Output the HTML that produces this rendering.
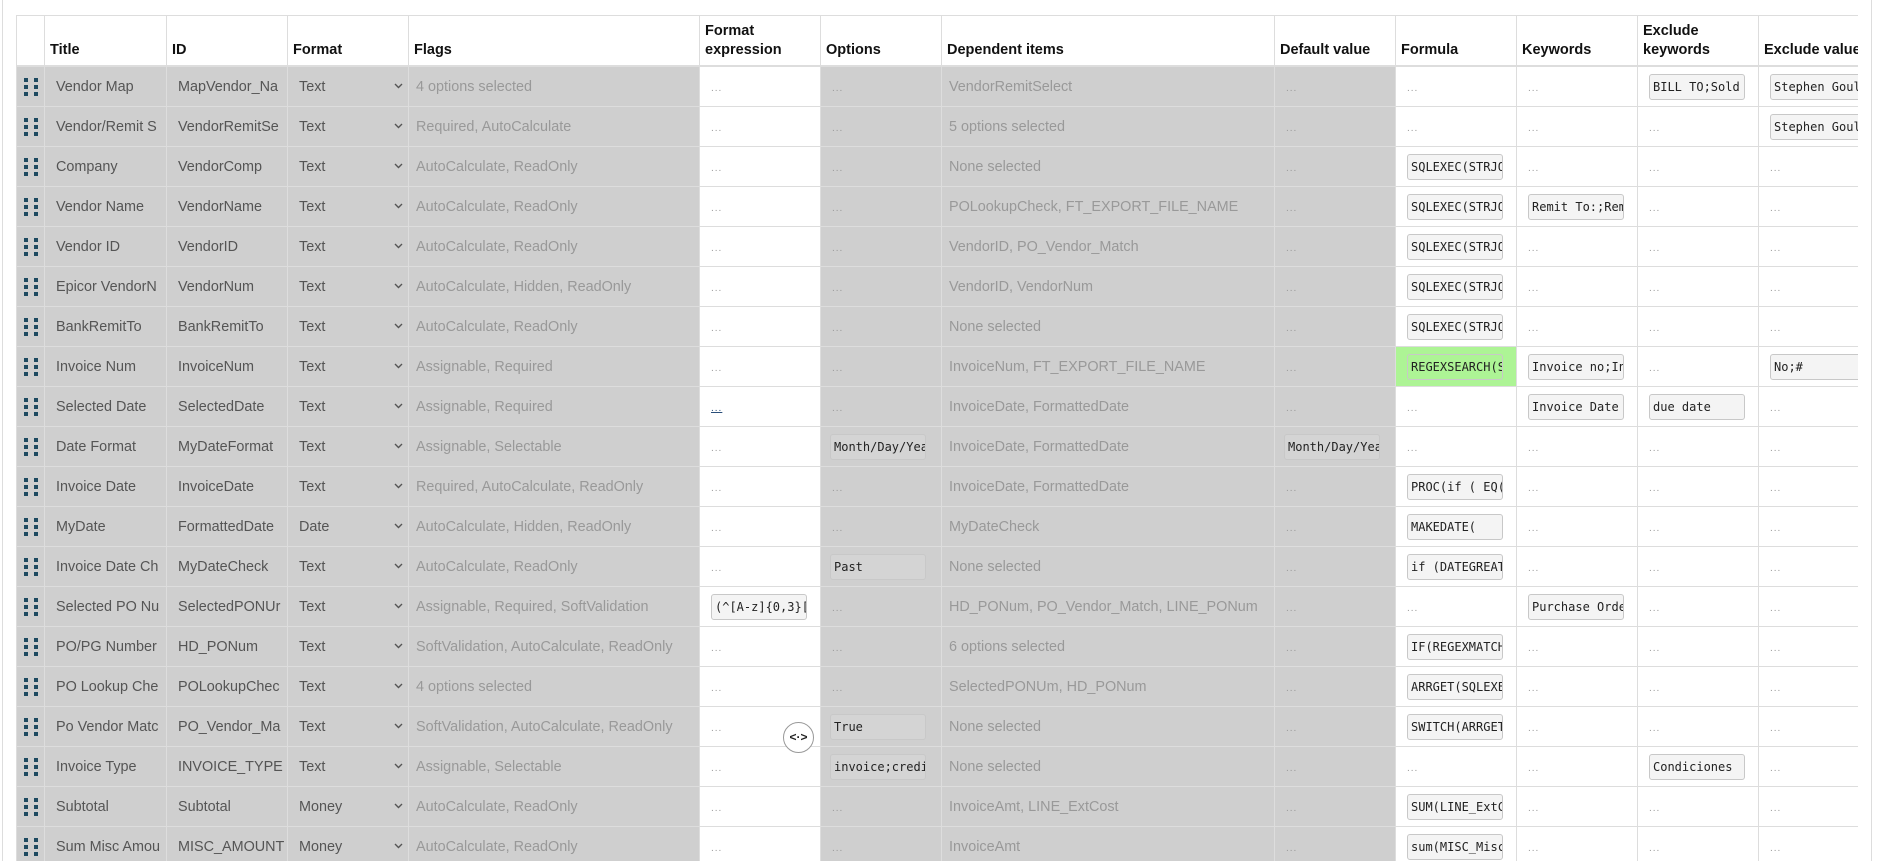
<!DOCTYPE html>
<html><head><meta charset="utf-8"><style>
body{margin:0;width:1879px;height:861px;overflow:hidden;background:#fff;font-family:"Liberation Sans",Arial,sans-serif;position:relative}
.lline{position:absolute;left:2px;top:0;width:1px;height:861px;background:#ddd}
.rline{position:absolute;left:1871px;top:0;width:1px;height:861px;background:#ddd}
.wrap{position:absolute;left:16px;top:15px;width:1842px;height:846px;overflow:hidden}
table{border-collapse:collapse;table-layout:fixed;width:1863px}
th{height:44px;border:1px solid #ddd;border-bottom:2px solid #ddd;text-align:left;vertical-align:bottom;font-size:14.5px;font-weight:bold;color:#111;padding:0 5px 5px 5px;line-height:19px;white-space:nowrap;overflow:hidden}
td{height:39px;border:1px solid #ddd;padding:0 0 0 11px;font-size:14.4px;white-space:nowrap;overflow:hidden;color:#555;position:relative}
td.g{background:#cfcfcf}
td.f{color:#999;padding-left:7px}
td.dr{padding:0}
.dots{display:grid;grid-template-columns:4px 4px;column-gap:6px;row-gap:3px;width:14px;margin-left:7px}
.dots i{display:block;width:4px;height:4px;background:#1e4a60}
.d{color:#999;font-size:10px;letter-spacing:1px}
.b{display:inline-block;box-sizing:border-box;width:96px;height:26px;border:1px solid #c8c8c8;border-radius:3px;background:#f4f4f4;font-family:"DejaVu Sans Mono","Liberation Mono",monospace;font-size:12px;color:#222;line-height:24px;padding-left:3px;overflow:hidden;white-space:nowrap;vertical-align:middle}
td.g .b{background:#d4d4d4}
.ch{position:absolute;right:5px;top:16px;width:9px;height:6px}
.grn{background:#adf495 !important}
.lk{color:#2a4f7a;text-decoration:underline}
.btn{position:absolute;left:783px;top:722px;width:31px;height:31px;border-radius:50%;border:1px solid #999;background:#fff;box-sizing:border-box;font-size:12px;font-weight:bold;text-align:center;line-height:29px;color:#222}
</style></head><body>
<svg width="0" height="0" style="position:absolute"><defs><symbol id="cv" viewBox="0 0 9 6"><path d="M1 1L4.5 4.5L8 1" fill="none" stroke="#555" stroke-width="1.4"/></symbol></defs></svg>
<div class="lline"></div><div class="rline"></div>
<div class="wrap"><table>
<colgroup><col style="width:28px"><col style="width:122px"><col style="width:121px"><col style="width:121px"><col style="width:291px"><col style="width:121px"><col style="width:121px"><col style="width:333px"><col style="width:121px"><col style="width:121px"><col style="width:121px"><col style="width:121px"><col style="width:121px"></colgroup>
<tr><th></th><th>Title</th><th>ID</th><th>Format</th><th>Flags</th><th>Format<br>expression</th><th>Options</th><th>Dependent items</th><th>Default value</th><th>Formula</th><th>Keywords</th><th>Exclude<br>keywords</th><th>Exclude value</th></tr>

<tr><td class="g dr"><div class="dots"><i></i><i></i><i></i><i></i><i></i><i></i></div></td><td class="g">Vendor Map</td><td class="g">MapVendor_Na</td><td class="g">Text<svg class="ch"><use href="#cv"/></svg></td><td class="g f">4 options selected</td><td><span class="d">...</span></td><td class="g"><span class="d">...</span></td><td class="g f">VendorRemitSelect</td><td class="g"><span class="d">...</span></td><td><span class="d">...</span></td><td><span class="d">...</span></td><td><span class="b">BILL TO;Sold T</span></td><td><span class="b">Stephen Gould</span></td></tr>

<tr><td class="g dr"><div class="dots"><i></i><i></i><i></i><i></i><i></i><i></i></div></td><td class="g">Vendor/Remit S</td><td class="g">VendorRemitSe</td><td class="g">Text<svg class="ch"><use href="#cv"/></svg></td><td class="g f">Required, AutoCalculate</td><td><span class="d">...</span></td><td class="g"><span class="d">...</span></td><td class="g f">5 options selected</td><td class="g"><span class="d">...</span></td><td><span class="d">...</span></td><td><span class="d">...</span></td><td><span class="d">...</span></td><td><span class="b">Stephen Gould</span></td></tr>

<tr><td class="g dr"><div class="dots"><i></i><i></i><i></i><i></i><i></i><i></i></div></td><td class="g">Company</td><td class="g">VendorComp</td><td class="g">Text<svg class="ch"><use href="#cv"/></svg></td><td class="g f">AutoCalculate, ReadOnly</td><td><span class="d">...</span></td><td class="g"><span class="d">...</span></td><td class="g f">None selected</td><td class="g"><span class="d">...</span></td><td><span class="b">SQLEXEC(STRJOIN</span></td><td><span class="d">...</span></td><td><span class="d">...</span></td><td><span class="d">...</span></td></tr>

<tr><td class="g dr"><div class="dots"><i></i><i></i><i></i><i></i><i></i><i></i></div></td><td class="g">Vendor Name</td><td class="g">VendorName</td><td class="g">Text<svg class="ch"><use href="#cv"/></svg></td><td class="g f">AutoCalculate, ReadOnly</td><td><span class="d">...</span></td><td class="g"><span class="d">...</span></td><td class="g f">POLookupCheck, FT_EXPORT_FILE_NAME</td><td class="g"><span class="d">...</span></td><td><span class="b">SQLEXEC(STRJOIN</span></td><td><span class="b">Remit To:;Remit</span></td><td><span class="d">...</span></td><td><span class="d">...</span></td></tr>

<tr><td class="g dr"><div class="dots"><i></i><i></i><i></i><i></i><i></i><i></i></div></td><td class="g">Vendor ID</td><td class="g">VendorID</td><td class="g">Text<svg class="ch"><use href="#cv"/></svg></td><td class="g f">AutoCalculate, ReadOnly</td><td><span class="d">...</span></td><td class="g"><span class="d">...</span></td><td class="g f">VendorID, PO_Vendor_Match</td><td class="g"><span class="d">...</span></td><td><span class="b">SQLEXEC(STRJOIN</span></td><td><span class="d">...</span></td><td><span class="d">...</span></td><td><span class="d">...</span></td></tr>

<tr><td class="g dr"><div class="dots"><i></i><i></i><i></i><i></i><i></i><i></i></div></td><td class="g">Epicor VendorN</td><td class="g">VendorNum</td><td class="g">Text<svg class="ch"><use href="#cv"/></svg></td><td class="g f">AutoCalculate, Hidden, ReadOnly</td><td><span class="d">...</span></td><td class="g"><span class="d">...</span></td><td class="g f">VendorID, VendorNum</td><td class="g"><span class="d">...</span></td><td><span class="b">SQLEXEC(STRJOIN</span></td><td><span class="d">...</span></td><td><span class="d">...</span></td><td><span class="d">...</span></td></tr>

<tr><td class="g dr"><div class="dots"><i></i><i></i><i></i><i></i><i></i><i></i></div></td><td class="g">BankRemitTo</td><td class="g">BankRemitTo</td><td class="g">Text<svg class="ch"><use href="#cv"/></svg></td><td class="g f">AutoCalculate, ReadOnly</td><td><span class="d">...</span></td><td class="g"><span class="d">...</span></td><td class="g f">None selected</td><td class="g"><span class="d">...</span></td><td><span class="b">SQLEXEC(STRJOIN</span></td><td><span class="d">...</span></td><td><span class="d">...</span></td><td><span class="d">...</span></td></tr>

<tr><td class="g dr"><div class="dots"><i></i><i></i><i></i><i></i><i></i><i></i></div></td><td class="g">Invoice Num</td><td class="g">InvoiceNum</td><td class="g">Text<svg class="ch"><use href="#cv"/></svg></td><td class="g f">Assignable, Required</td><td><span class="d">...</span></td><td class="g"><span class="d">...</span></td><td class="g f">InvoiceNum, FT_EXPORT_FILE_NAME</td><td class="g"><span class="d">...</span></td><td class="grn"><span class="b" style="background:#adf495">REGEXSEARCH(STR</span></td><td><span class="b">Invoice no;Inv</span></td><td><span class="d">...</span></td><td><span class="b">No;#</span></td></tr>

<tr><td class="g dr"><div class="dots"><i></i><i></i><i></i><i></i><i></i><i></i></div></td><td class="g">Selected Date</td><td class="g">SelectedDate</td><td class="g">Text<svg class="ch"><use href="#cv"/></svg></td><td class="g f">Assignable, Required</td><td><span class="d lk">...</span></td><td class="g"><span class="d">...</span></td><td class="g f">InvoiceDate, FormattedDate</td><td class="g"><span class="d">...</span></td><td><span class="d">...</span></td><td><span class="b">Invoice Date</span></td><td><span class="b">due date</span></td><td><span class="d">...</span></td></tr>

<tr><td class="g dr"><div class="dots"><i></i><i></i><i></i><i></i><i></i><i></i></div></td><td class="g">Date Format</td><td class="g">MyDateFormat</td><td class="g">Text<svg class="ch"><use href="#cv"/></svg></td><td class="g f">Assignable, Selectable</td><td><span class="d">...</span></td><td class="g" style="padding-left:9px"><span class="b">Month/Day/Year</span></td><td class="g f">InvoiceDate, FormattedDate</td><td class="g" style="padding-left:9px"><span class="b">Month/Day/Year</span></td><td><span class="d">...</span></td><td><span class="d">...</span></td><td><span class="d">...</span></td><td><span class="d">...</span></td></tr>

<tr><td class="g dr"><div class="dots"><i></i><i></i><i></i><i></i><i></i><i></i></div></td><td class="g">Invoice Date</td><td class="g">InvoiceDate</td><td class="g">Text<svg class="ch"><use href="#cv"/></svg></td><td class="g f">Required, AutoCalculate, ReadOnly</td><td><span class="d">...</span></td><td class="g"><span class="d">...</span></td><td class="g f">InvoiceDate, FormattedDate</td><td class="g"><span class="d">...</span></td><td><span class="b">PROC(if ( EQ(</span></td><td><span class="d">...</span></td><td><span class="d">...</span></td><td><span class="d">...</span></td></tr>

<tr><td class="g dr"><div class="dots"><i></i><i></i><i></i><i></i><i></i><i></i></div></td><td class="g">MyDate</td><td class="g">FormattedDate</td><td class="g">Date<svg class="ch"><use href="#cv"/></svg></td><td class="g f">AutoCalculate, Hidden, ReadOnly</td><td><span class="d">...</span></td><td class="g"><span class="d">...</span></td><td class="g f">MyDateCheck</td><td class="g"><span class="d">...</span></td><td><span class="b">MAKEDATE(</span></td><td><span class="d">...</span></td><td><span class="d">...</span></td><td><span class="d">...</span></td></tr>

<tr><td class="g dr"><div class="dots"><i></i><i></i><i></i><i></i><i></i><i></i></div></td><td class="g">Invoice Date Ch</td><td class="g">MyDateCheck</td><td class="g">Text<svg class="ch"><use href="#cv"/></svg></td><td class="g f">AutoCalculate, ReadOnly</td><td><span class="d">...</span></td><td class="g" style="padding-left:9px"><span class="b">Past</span></td><td class="g f">None selected</td><td class="g"><span class="d">...</span></td><td><span class="b">if (DATEGREATER</span></td><td><span class="d">...</span></td><td><span class="d">...</span></td><td><span class="d">...</span></td></tr>

<tr><td class="g dr"><div class="dots"><i></i><i></i><i></i><i></i><i></i><i></i></div></td><td class="g">Selected PO Nu</td><td class="g">SelectedPONUr</td><td class="g">Text<svg class="ch"><use href="#cv"/></svg></td><td class="g f">Assignable, Required, SoftValidation</td><td><span class="b">(^[A-z]{0,3}[</span></td><td class="g"><span class="d">...</span></td><td class="g f">HD_PONum, PO_Vendor_Match, LINE_PONum</td><td class="g"><span class="d">...</span></td><td><span class="d">...</span></td><td><span class="b">Purchase Order</span></td><td><span class="d">...</span></td><td><span class="d">...</span></td></tr>

<tr><td class="g dr"><div class="dots"><i></i><i></i><i></i><i></i><i></i><i></i></div></td><td class="g">PO/PG Number</td><td class="g">HD_PONum</td><td class="g">Text<svg class="ch"><use href="#cv"/></svg></td><td class="g f">SoftValidation, AutoCalculate, ReadOnly</td><td><span class="d">...</span></td><td class="g"><span class="d">...</span></td><td class="g f">6 options selected</td><td class="g"><span class="d">...</span></td><td><span class="b">IF(REGEXMATCH(</span></td><td><span class="d">...</span></td><td><span class="d">...</span></td><td><span class="d">...</span></td></tr>

<tr><td class="g dr"><div class="dots"><i></i><i></i><i></i><i></i><i></i><i></i></div></td><td class="g">PO Lookup Che</td><td class="g">POLookupChec</td><td class="g">Text<svg class="ch"><use href="#cv"/></svg></td><td class="g f">4 options selected</td><td><span class="d">...</span></td><td class="g"><span class="d">...</span></td><td class="g f">SelectedPONUm, HD_PONum</td><td class="g"><span class="d">...</span></td><td><span class="b">ARRGET(SQLEXEC</span></td><td><span class="d">...</span></td><td><span class="d">...</span></td><td><span class="d">...</span></td></tr>

<tr><td class="g dr"><div class="dots"><i></i><i></i><i></i><i></i><i></i><i></i></div></td><td class="g">Po Vendor Matc</td><td class="g">PO_Vendor_Ma</td><td class="g">Text<svg class="ch"><use href="#cv"/></svg></td><td class="g f">SoftValidation, AutoCalculate, ReadOnly</td><td><span class="d">...</span></td><td class="g" style="padding-left:9px"><span class="b">True</span></td><td class="g f">None selected</td><td class="g"><span class="d">...</span></td><td><span class="b">SWITCH(ARRGET(</span></td><td><span class="d">...</span></td><td><span class="d">...</span></td><td><span class="d">...</span></td></tr>

<tr><td class="g dr"><div class="dots"><i></i><i></i><i></i><i></i><i></i><i></i></div></td><td class="g">Invoice Type</td><td class="g">INVOICE_TYPE</td><td class="g">Text<svg class="ch"><use href="#cv"/></svg></td><td class="g f">Assignable, Selectable</td><td><span class="d">...</span></td><td class="g" style="padding-left:9px"><span class="b">invoice;credit</span></td><td class="g f">None selected</td><td class="g"><span class="d">...</span></td><td><span class="d">...</span></td><td><span class="d">...</span></td><td><span class="b">Condiciones</span></td><td><span class="d">...</span></td></tr>

<tr><td class="g dr"><div class="dots"><i></i><i></i><i></i><i></i><i></i><i></i></div></td><td class="g">Subtotal</td><td class="g">Subtotal</td><td class="g">Money<svg class="ch"><use href="#cv"/></svg></td><td class="g f">AutoCalculate, ReadOnly</td><td><span class="d">...</span></td><td class="g"><span class="d">...</span></td><td class="g f">InvoiceAmt, LINE_ExtCost</td><td class="g"><span class="d">...</span></td><td><span class="b">SUM(LINE_ExtCo</span></td><td><span class="d">...</span></td><td><span class="d">...</span></td><td><span class="d">...</span></td></tr>

<tr><td class="g dr"><div class="dots"><i></i><i></i><i></i><i></i><i></i><i></i></div></td><td class="g">Sum Misc Amou</td><td class="g">MISC_AMOUNT</td><td class="g">Money<svg class="ch"><use href="#cv"/></svg></td><td class="g f">AutoCalculate, ReadOnly</td><td><span class="d">...</span></td><td class="g"><span class="d">...</span></td><td class="g f">InvoiceAmt</td><td class="g"><span class="d">...</span></td><td><span class="b">sum(MISC_Misc</span></td><td><span class="d">...</span></td><td><span class="d">...</span></td><td><span class="d">...</span></td></tr>
</table></div>
<div class="btn">&lt;&middot;&gt;</div>
</body></html>
